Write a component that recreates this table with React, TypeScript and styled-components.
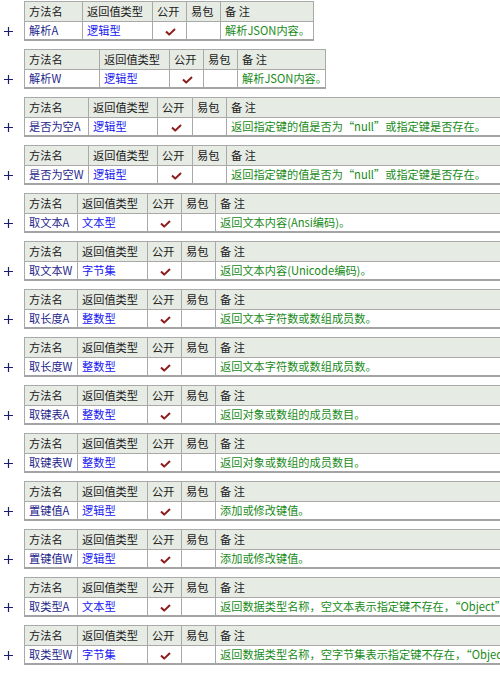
import React from "react";
import styled, { createGlobalStyle } from "styled-components";

const GlobalStyle = createGlobalStyle`
  html, body {
    margin: 0;
    padding: 0;
    background: #ffffff;
    overflow: hidden;
  }
`;

type Method = {
  name: string;
  type: string;
  remark: string;
  cols: number[];
};

const W1 = [58, 70, 34, 34, 93];
const W2 = [75, 70, 34, 34, 88];
const W3 = [64, 69, 35, 34, 420];
const W5 = [53, 70, 34, 34, 420];

const methods: Method[] = [
  { name: "解析A", type: "逻辑型", remark: "解析JSON内容。", cols: W1 },
  { name: "解析W", type: "逻辑型", remark: "解析JSON内容。", cols: W2 },
  { name: "是否为空A", type: "逻辑型", remark: "返回指定键的值是否为“null”或指定键是否存在。", cols: W3 },
  { name: "是否为空W", type: "逻辑型", remark: "返回指定键的值是否为“null”或指定键是否存在。", cols: W3 },
  { name: "取文本A", type: "文本型", remark: "返回文本内容(Ansi编码)。", cols: W5 },
  { name: "取文本W", type: "字节集", remark: "返回文本内容(Unicode编码)。", cols: W5 },
  { name: "取长度A", type: "整数型", remark: "返回文本字符数或数组成员数。", cols: W5 },
  { name: "取长度W", type: "整数型", remark: "返回文本字符数或数组成员数。", cols: W5 },
  { name: "取键表A", type: "整数型", remark: "返回对象或数组的成员数目。", cols: W5 },
  { name: "取键表W", type: "整数型", remark: "返回对象或数组的成员数目。", cols: W5 },
  { name: "置键值A", type: "逻辑型", remark: "添加或修改键值。", cols: W5 },
  { name: "置键值W", type: "逻辑型", remark: "添加或修改键值。", cols: W5 },
  {
    name: "取类型A",
    type: "文本型",
    remark: "返回数据类型名称，空文本表示指定键不存在，“Object”表示对象，“Array”表示数组。",
    cols: W5,
  },
  {
    name: "取类型W",
    type: "字节集",
    remark: "返回数据类型名称，空字节集表示指定键不存在，“Object”表示对象，“Array”表示数组。",
    cols: W5,
  },
];

const Page = styled.div`
  display: flex;
  flex-direction: column;
  gap: 8px;
  padding-top: 1px;
  font-family: "Noto Sans CJK SC", "Noto Sans", sans-serif;
  font-size: 11.2px;
`;

const Block = styled.div`
  display: flex;
  align-items: flex-start;
`;

const PlusSlot = styled.div`
  width: 24px;
  flex: none;
  height: 20px;
  margin-top: 20px;
  display: flex;
  align-items: center;
  padding-left: 4px;
  box-sizing: border-box;
  color: #1c1c70;
`;

const Table = styled.table<{ $width: number }>`
  border-collapse: collapse;
  table-layout: fixed;
  width: ${(p) => p.$width}px;
  flex: none;
`;

const HeadCell = styled.th`
  height: 19px;
  padding: 0 2px 0 4px;
  border: 1px solid #a9a9a9;
  background: #e6ebe4;
  color: #1a1a1a;
  font-weight: normal;
  text-align: left;
  white-space: nowrap;
  overflow: hidden;
  line-height: 19px;
`;

const DataCell = styled.td<{ $tone?: "name" | "type" | "remark" | "flag" }>`
  height: 17px;
  padding: 0 2px 0 4px;
  border: 1px solid #a9a9a9;
  border-bottom: 2px solid #a4a4a4;
  background: #ffffff;
  white-space: nowrap;
  overflow: hidden;
  line-height: 17px;
  text-align: ${(p) => (p.$tone === "flag" ? "center" : "left")};
  color: ${(p) =>
    p.$tone === "name"
      ? "#1f1f8a"
      : p.$tone === "type"
      ? "#1515f0"
      : p.$tone === "remark"
      ? "#178a17"
      : "#000"};
`;

const Check = () => (
  <svg width="11" height="8" viewBox="0 0 11 8" style={{ display: "inline-block", verticalAlign: "middle" }}>
    <path d="M1 3.6 L4.2 6.6 L10 1" fill="none" stroke="#8e1b1b" strokeWidth="2" strokeLinejoin="round" />
  </svg>
);

const Plus = () => (
  <svg width="9" height="9" viewBox="0 0 9 9">
    <path d="M0 4.5 H9 M4.5 0 V9" stroke="currentColor" strokeWidth="1.2" />
  </svg>
);

const MethodTable = ({ m }: { m: Method }) => {
  const total = m.cols.reduce((a, b) => a + b, 0);
  return (
    <Block>
      <PlusSlot>
        <Plus />
      </PlusSlot>
      <Table $width={total}>
        <colgroup>
          {m.cols.map((w, i) => (
            <col key={i} style={{ width: w }} />
          ))}
        </colgroup>
        <thead>
          <tr>
            <HeadCell>方法名</HeadCell>
            <HeadCell>返回值类型</HeadCell>
            <HeadCell>公开</HeadCell>
            <HeadCell>易包</HeadCell>
            <HeadCell>备 注</HeadCell>
          </tr>
        </thead>
        <tbody>
          <tr>
            <DataCell $tone="name">{m.name}</DataCell>
            <DataCell $tone="type">{m.type}</DataCell>
            <DataCell $tone="flag">
              <Check />
            </DataCell>
            <DataCell />
            <DataCell $tone="remark">{m.remark}</DataCell>
          </tr>
        </tbody>
      </Table>
    </Block>
  );
};

export default function App() {
  return (
    <>
      <GlobalStyle />
      <Page>
        {methods.map((m, i) => (
          <MethodTable key={i} m={m} />
        ))}
      </Page>
    </>
  );
}
